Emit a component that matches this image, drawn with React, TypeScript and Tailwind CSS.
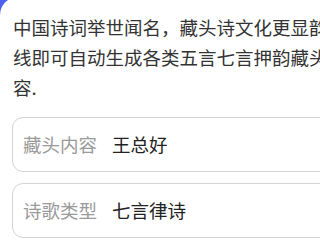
export default function App() {
  const font = { fontFamily: '"Noto Sans CJK SC", "Noto Sans", sans-serif' }

  return (
    <div className="w-[320px] h-[240px] overflow-hidden bg-[#4d5ff0]" style={font}>
      {/* White card */}
      <div className="w-[402px] min-h-[260px] bg-white rounded-tl-[18px] -mt-[3px] pt-[15px] pl-[12px]">
        <p className="w-[377px] pl-[1px] text-[18.5px] leading-[30px] text-[#333333]">
          中国诗词举世闻名，藏头诗文化更显韵味，在线即可自动生成各类五言七言押韵藏头诗的内容.
        </p>

        {/* Form fields */}
        <div className="mt-[15px] flex flex-col gap-[11px]">
          {[
            { label: '藏头内容', value: '王总好' },
            { label: '诗歌类型', value: '七言律诗' },
          ].map((f) => (
            <div
              key={f.label}
              className="h-[55px] w-[378px] flex items-center gap-[15px] px-[10px] border border-[#d4d4d4] rounded-[11px]"
            >
              <span className="text-[18.5px] text-[#9a9a9a]">{f.label}</span>
              <span className="text-[18.5px] text-[#222222]">{f.value}</span>
            </div>
          ))}
        </div>
      </div>
    </div>
  )
}
